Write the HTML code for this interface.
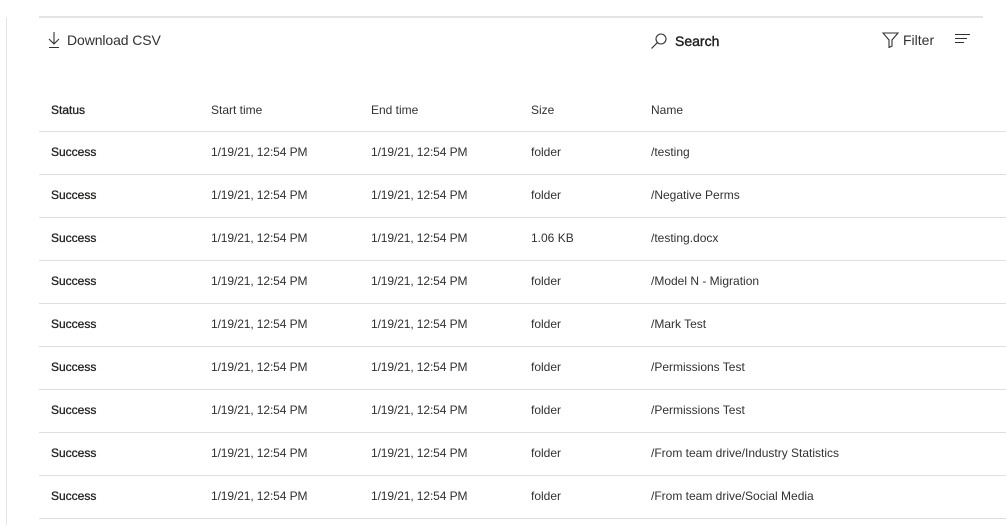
<!DOCTYPE html><html><head><style>
body{margin:0;width:1006px;height:525px;background:#fff;position:relative;overflow:hidden;font-family:"Liberation Sans",sans-serif;color:#323130}
.a{position:absolute}
.t{position:absolute;font-size:12px;white-space:nowrap;line-height:14px}
.b{color:#201f1e;-webkit-text-stroke:0.3px #201f1e}
.s{position:absolute;left:39px;right:0;height:1px;background:#e1dfdd}
</style></head><body>
<div class="a" style="left:6px;top:17px;width:1px;height:508px;background:#e5e5e5"></div>
<div class="a" style="left:39px;top:16px;width:944px;height:2px;background:#e3e3e3"></div>
<svg class="a" style="left:47px;top:31px" width="14" height="18" viewBox="0 0 14 18"><path d="M7 1V13M2 8l5 5 5-5M2 16.5h10" stroke="#323130" fill="none" stroke-width="1.1"/></svg>
<div class="t" style="left:67px;top:32px;font-size:14px;line-height:17px;letter-spacing:-0.1px">Download CSV</div>
<svg class="a" style="left:650px;top:32px" width="18" height="18" viewBox="0 0 18 18"><circle cx="11" cy="7" r="5" stroke="#323130" fill="none" stroke-width="1.1"/><path d="M7.5 10.5L1.5 16.5" stroke="#323130" stroke-width="1.2"/></svg>
<div class="t b" style="left:675px;top:33px;font-size:14px;line-height:17px;-webkit-text-stroke:0.4px #201f1e">Search</div>
<svg class="a" style="left:882px;top:32px" width="18" height="16" viewBox="0 0 18 16"><path d="M1 1h15l-6 7v6l-3 1.5V8z" stroke="#323130" fill="none" stroke-width="1.1"/></svg>
<div class="t" style="left:903px;top:32px;font-size:14px;line-height:17px">Filter</div>
<svg class="a" style="left:955px;top:33px" width="16" height="12"><path d="M0 1.5h15M0 5.5h12M0 9.5h9" stroke="#323130" stroke-width="1.1"/></svg>
<div class="t b" style="left:51px;top:103px">Status</div>
<div class="t" style="left:211px;top:103px">Start time</div>
<div class="t" style="left:371px;top:103px">End time</div>
<div class="t" style="left:531px;top:103px">Size</div>
<div class="t" style="left:651px;top:103px">Name</div>
<div id="rows"></div>
<script>
var n=["/testing","/Negative Perms","/testing.docx","/Model N - Migration","/Mark Test","/Permissions Test","/Permissions Test","/From team drive/Industry Statistics","/From team drive/Social Media"];
var h="";
for(var i=0;i<9;i++){var y=131+i*43;
h+='<div class="s" style="top:'+y+'px"></div>';
var ty=y+14;
h+='<div class="t b" style="left:51px;top:'+ty+'px">Success</div>';
h+='<div class="t" style="left:211px;top:'+ty+'px;letter-spacing:-0.1px">1/19/21, 12:54 PM</div>';
h+='<div class="t" style="left:371px;top:'+ty+'px;letter-spacing:-0.1px">1/19/21, 12:54 PM</div>';
h+='<div class="t" style="left:531px;top:'+ty+'px">'+(i==2?'1.06 KB':'folder')+'</div>';
h+='<div class="t" style="left:651px;top:'+ty+'px">'+n[i]+'</div>';}
h+='<div class="s" style="top:518px"></div>';
document.getElementById("rows").innerHTML=h;
</script>
</body></html>
